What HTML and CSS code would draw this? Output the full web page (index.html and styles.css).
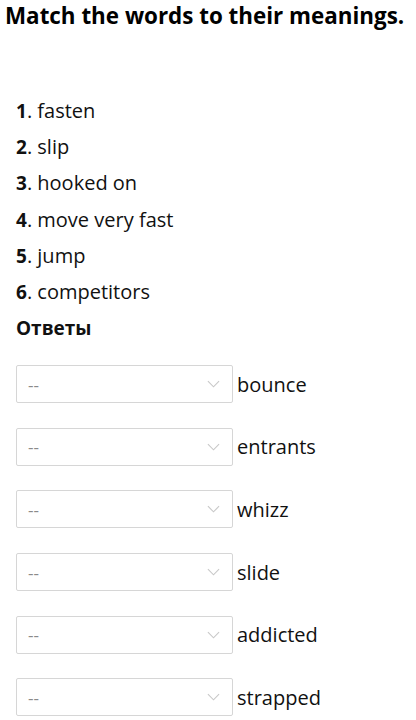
FILE: index.html
```html
<!DOCTYPE html>
<html>
<head>
<meta charset="utf-8">
<link rel="stylesheet" href="styles.css">
</head>
<body>
<h1 class="title">Match the words to their meanings.</h1>
<ol class="words">
  <li><b>1</b>. fasten</li>
  <li><b>2</b>. slip</li>
  <li><b>3</b>. hooked on</li>
  <li><b>4</b>. move very fast</li>
  <li><b>5</b>. jump</li>
  <li><b>6</b>. competitors</li>
</ol>
<div class="answers-title">Ответы</div>
<div class="answers">
  <div class="row"><div class="select"><span>--</span><svg viewBox="0 0 14 8" class="chev"><path d="M1 1l6 6 6-6" /></svg></div><span class="label">bounce</span></div>
  <div class="row"><div class="select"><span>--</span><svg viewBox="0 0 14 8" class="chev"><path d="M1 1l6 6 6-6" /></svg></div><span class="label">entrants</span></div>
  <div class="row"><div class="select"><span>--</span><svg viewBox="0 0 14 8" class="chev"><path d="M1 1l6 6 6-6" /></svg></div><span class="label">whizz</span></div>
  <div class="row"><div class="select"><span>--</span><svg viewBox="0 0 14 8" class="chev"><path d="M1 1l6 6 6-6" /></svg></div><span class="label">slide</span></div>
  <div class="row"><div class="select"><span>--</span><svg viewBox="0 0 14 8" class="chev"><path d="M1 1l6 6 6-6" /></svg></div><span class="label">addicted</span></div>
  <div class="row"><div class="select"><span>--</span><svg viewBox="0 0 14 8" class="chev"><path d="M1 1l6 6 6-6" /></svg></div><span class="label">strapped</span></div>
</div>
</body>
</html>
```
FILE: styles.css
```css
html, body {
  margin: 0;
  padding: 0;
  background: #fff;
}
body {
  font-family: "Open Sans", "Noto Sans", sans-serif;
  color: #111;
}
.title {
  margin: 0;
  padding: 1px 0 0 5px;
  font-size: 22.4px;
  font-weight: 700;
  line-height: 30px;
  color: #000;
}
.words {
  list-style: none;
  margin: 62px 0 0 16px;
  padding: 0;
  font-size: 20px;
}
.words li {
  line-height: 36.2px;
}
.words b {
  font-weight: 700;
  font-size: 19px;
}
.answers-title {
  margin-left: 16px;
  font-size: 19px;
  font-weight: 700;
  line-height: 36px;
}
.answers {
  margin: 19px 0 0 16px;
  display: flex;
  flex-direction: column;
  gap: 24.6px;
}
.row {
  display: flex;
  align-items: center;
  gap: 4px;
}
.select {
  box-sizing: border-box;
  width: 217px;
  height: 38px;
  border: 1px solid #d6d6d6;
  border-radius: 2px;
  display: flex;
  align-items: center;
  justify-content: space-between;
  padding: 0 12px 0 11px;
  font-size: 17px;
  color: #8a8a8a;
}
.chev {
  width: 13px;
  height: 8px;
  fill: none;
  stroke: #c8c8c8;
  stroke-width: 1.2;
}
.label {
  font-size: 20px;
  color: #111;
}
```
